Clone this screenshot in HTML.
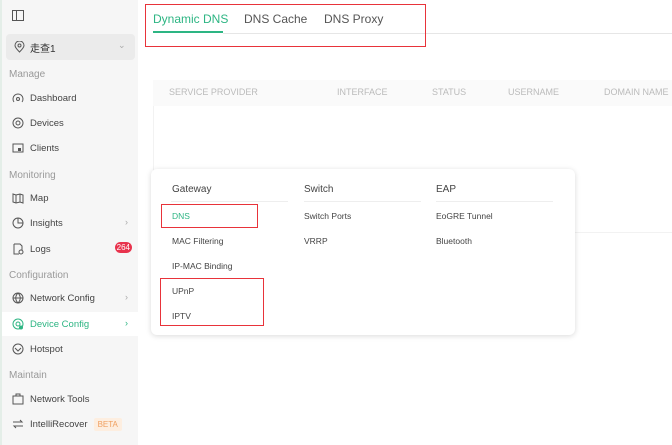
<!DOCTYPE html>
<html><head><meta charset="utf-8"><style>
*{box-sizing:border-box;margin:0;padding:0}
body{width:672px;height:445px;overflow:hidden;background:#fff;font-family:"Liberation Sans","Noto Sans CJK SC",sans-serif;position:relative;color:#333}
.sb{position:absolute;left:0;top:0;width:138px;height:445px;background:#f6f6f6;border-left:2px solid #e4eee8}
.a{position:absolute}
.sec{position:absolute;left:7px;font-size:10px;color:#999}
.it{position:absolute;left:0;width:136px;height:24px;font-size:9.5px;color:#444;display:flex;align-items:center;padding-left:10px}
.it svg{width:12px;height:12px;margin-right:6px;flex:none}
.chev{position:absolute;right:10px;top:6px;font-size:9px;color:#aaa}
.tab{position:absolute;top:12px;font-size:12px;color:#555}
.th{position:absolute;top:87px;font-size:9px;color:#bbb}
.pi{position:absolute;font-size:8.5px;color:#444}
.ph{position:absolute;top:184px;font-size:10px;color:#444}
.pl{position:absolute;top:201px;height:1px;background:#eee;width:117px}
.red{position:absolute;border:1.5px solid #e8333a}
</style></head><body>
<div class="sb">
<svg class="a" style="left:10px;top:10px" width="12" height="11" viewBox="0 0 12 11"><rect x=".5" y=".5" width="11" height="10" fill="none" stroke="#555"/><line x1="4.5" y1="1" x2="4.5" y2="10" stroke="#555"/></svg>
<div class="a" style="left:4px;top:34px;width:129px;height:26px;background:#ebebeb;border-radius:4px"></div>
<svg class="a" style="left:12px;top:41px" width="11" height="12" viewBox="0 0 11 12"><path d="M5.5 11C2 7.5 1 6 1 4.5a4.5 4.5 0 0 1 9 0C10 6 9 7.5 5.5 11z" fill="none" stroke="#555"/><circle cx="5.5" cy="4.5" r="1.5" fill="none" stroke="#555"/></svg>
<div class="a" style="left:28px;top:40px;font-size:10px;color:#333">走查1</div>
<div class="a" style="left:116px;top:40px;font-size:9px;color:#aaa">⌄</div>
<div class="sec" style="top:69px">Manage</div>
<div class="it" style="top:86px"><svg viewBox="0 0 12 12"><path d="M2 10A5 5 0 1 1 10 10" fill="none" stroke="#555"/><circle cx="6" cy="7" r="1.5" fill="none" stroke="#555"/></svg>Dashboard</div>
<div class="it" style="top:111px"><svg viewBox="0 0 12 12"><circle cx="6" cy="6" r="5" fill="none" stroke="#555"/><circle cx="6" cy="6" r="2" fill="none" stroke="#555"/></svg>Devices</div>
<div class="it" style="top:136px"><svg viewBox="0 0 12 12"><rect x="1" y="2" width="10" height="8" fill="none" stroke="#555"/><rect x="6" y="6" width="3" height="3" fill="#555"/></svg>Clients</div>
<div class="sec" style="top:170px">Monitoring</div>
<div class="it" style="top:186px"><svg viewBox="0 0 12 12"><path d="M1 2l3 1 4-1 3 1v8l-3-1-4 1-3-1z M4 3v8 M8 2v8" fill="none" stroke="#555"/></svg>Map</div>
<div class="it" style="top:211px"><svg viewBox="0 0 12 12"><circle cx="6" cy="6" r="5" fill="none" stroke="#555"/><path d="M6 1v5h5" fill="none" stroke="#555"/></svg>Insights<span class="chev">›</span></div>
<div class="it" style="top:237px"><svg viewBox="0 0 12 12"><path d="M2 1h6l2 2v4M2 1v10h5" fill="none" stroke="#555"/><circle cx="9" cy="9" r="2" fill="none" stroke="#555"/></svg>Logs<span class="a" style="right:6px;top:5px;background:#e8334d;color:#fff;font-size:8px;border-radius:7px;padding:1px 2px">264</span></div>
<div class="sec" style="top:270px">Configuration</div>
<div class="it" style="top:286px"><svg viewBox="0 0 12 12"><circle cx="6" cy="6" r="5" fill="none" stroke="#555"/><path d="M1 6h10M6 1c-3 3-3 7 0 10M6 1c3 3 3 7 0 10" fill="none" stroke="#555"/></svg>Network Config<span class="chev">›</span></div>
<div class="it" style="top:312px;background:#fff;color:#2db583"><svg viewBox="0 0 12 12"><circle cx="6" cy="6" r="5" fill="none" stroke="#2db583"/><circle cx="6" cy="6" r="2" fill="none" stroke="#2db583"/><circle cx="9" cy="9.5" r="2" fill="#2db583"/></svg>Device Config<span class="chev" style="color:#2db583">›</span></div>
<div class="it" style="top:337px"><svg viewBox="0 0 12 12"><circle cx="6" cy="6" r="5" fill="none" stroke="#555"/><path d="M3 5l3 3 3-3" fill="none" stroke="#555"/></svg>Hotspot</div>
<div class="sec" style="top:370px">Maintain</div>
<div class="it" style="top:387px"><svg viewBox="0 0 12 12"><rect x="1" y="3" width="10" height="8" fill="none" stroke="#555"/><path d="M4 3V1h4v2" fill="none" stroke="#555"/></svg>Network Tools</div>
<div class="it" style="top:412px"><svg viewBox="0 0 12 12"><path d="M1 4h9l-2-2M11 8H2l2 2" fill="none" stroke="#555"/></svg>IntelliRecover<span style="margin-left:6px;background:#fdeee0;color:#f0a060;font-size:8px;padding:2px 4px;border-radius:2px">BETA</span></div>
</div>
<div class="tab" style="left:153px;color:#2db583">Dynamic DNS</div>
<div class="a" style="left:153px;top:31px;width:70px;height:2px;background:#2db583"></div>
<div class="tab" style="left:244px">DNS Cache</div>
<div class="tab" style="left:324px">DNS Proxy</div>
<div class="a" style="left:223px;top:33px;width:449px;height:1px;background:#e6e6e6"></div>
<div class="red" style="left:145px;top:4px;width:281px;height:43px"></div>
<div class="a" style="left:153px;top:80px;width:519px;height:153px;border-left:1px solid #f2f2f2;border-bottom:1px solid #f2f2f2"></div>
<div class="a" style="left:153px;top:80px;width:519px;height:26px;background:#fafafa"></div>
<div class="th" style="left:169px">SERVICE PROVIDER</div>
<div class="th" style="left:337px">INTERFACE</div>
<div class="th" style="left:432px">STATUS</div>
<div class="th" style="left:508px">USERNAME</div>
<div class="th" style="left:604px">DOMAIN NAME</div>
<div class="a" style="left:151px;top:169px;width:424px;height:166px;background:#fff;border-radius:6px;box-shadow:0 1px 6px rgba(0,0,0,.15)"></div>
<div class="ph" style="left:172px">Gateway</div>
<div class="ph" style="left:304px">Switch</div>
<div class="ph" style="left:436px">EAP</div>
<div class="pl" style="left:171px"></div><div class="pl" style="left:304px"></div><div class="pl" style="left:436px"></div>
<div class="pi" style="left:172px;top:211px;color:#2db583">DNS</div>
<div class="pi" style="left:172px;top:236px">MAC Filtering</div>
<div class="pi" style="left:172px;top:261px">IP-MAC Binding</div>
<div class="pi" style="left:172px;top:286px">UPnP</div>
<div class="pi" style="left:172px;top:311px">IPTV</div>
<div class="pi" style="left:304px;top:211px">Switch Ports</div>
<div class="pi" style="left:304px;top:236px">VRRP</div>
<div class="pi" style="left:436px;top:211px">EoGRE Tunnel</div>
<div class="pi" style="left:436px;top:236px">Bluetooth</div>
<div class="red" style="left:161px;top:204px;width:97px;height:24px"></div>
<div class="red" style="left:160px;top:278px;width:104px;height:48px"></div>
</body></html>
